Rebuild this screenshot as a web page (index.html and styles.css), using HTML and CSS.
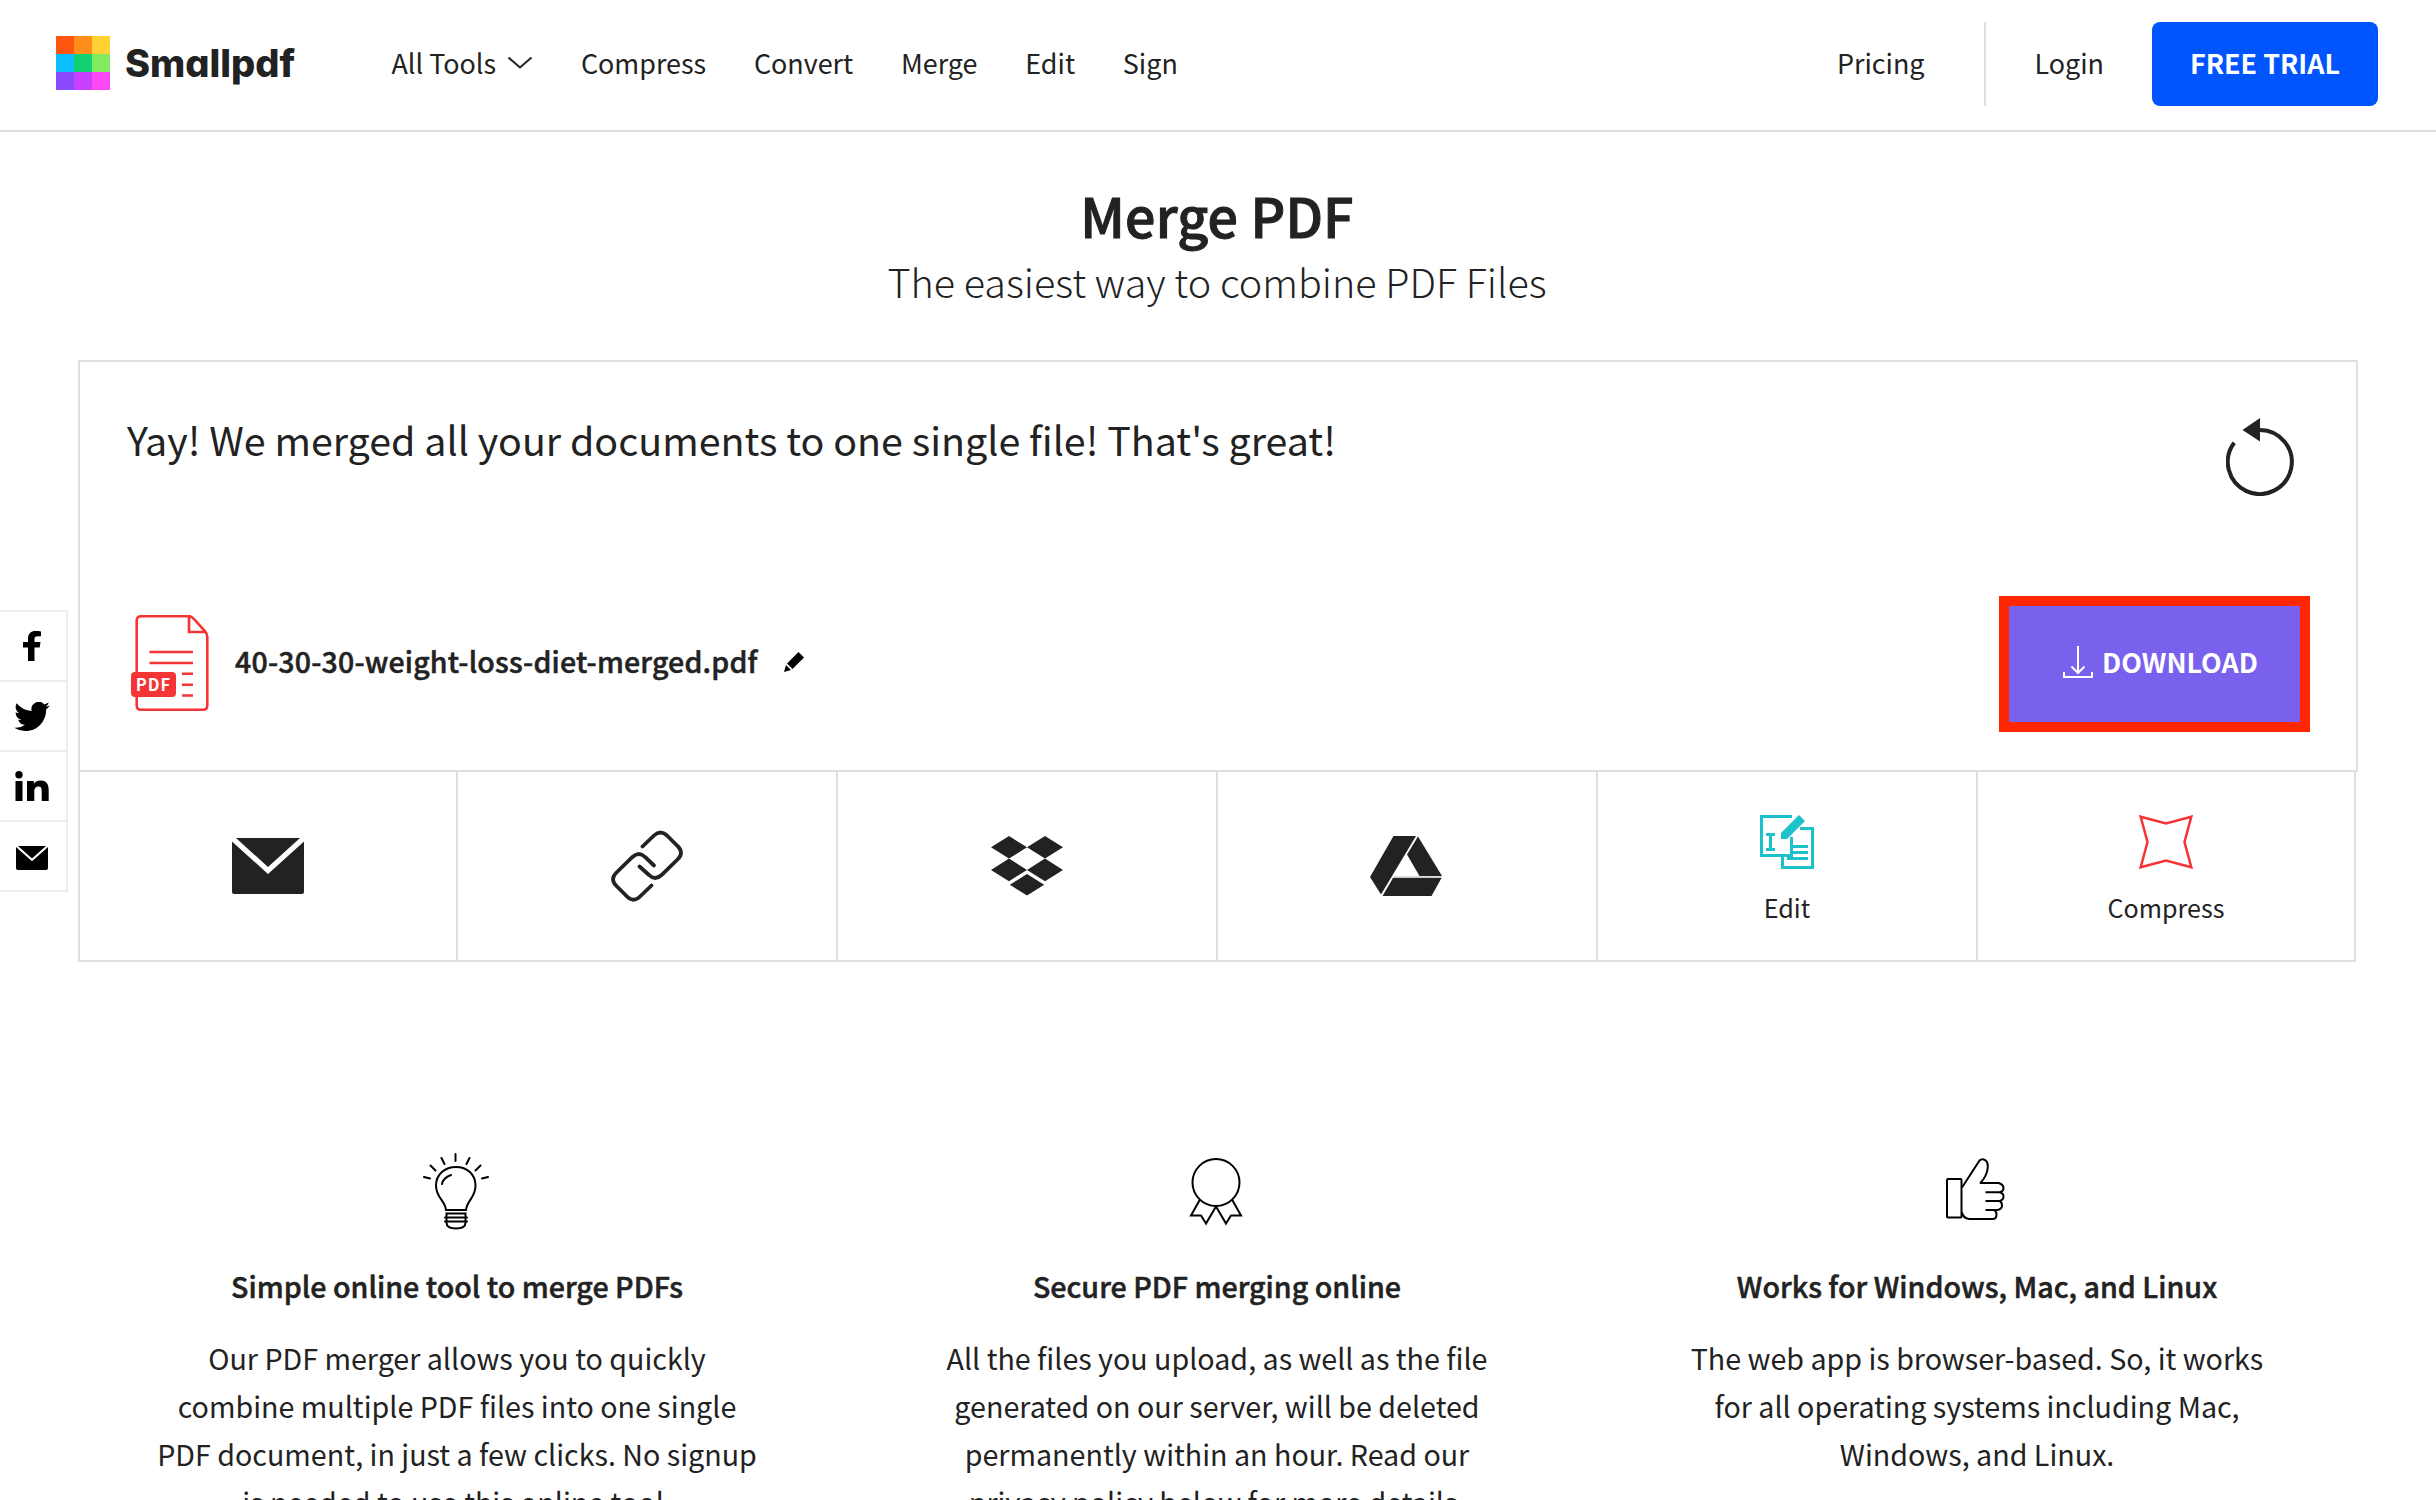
FILE: index.html
```html
<!DOCTYPE html>
<html lang="en">
<head>
    <meta charset="UTF-8">
    <meta name="viewport" content="width=device-width, initial-scale=1.0">
    <title>Merge PDF - Smallpdf</title>
    <link rel="stylesheet" href="styles.css">
</head>
<body>

<!-- Top navigation -->
<header class="header">
    <a class="logo" href="#">
        <svg width="54" height="54" viewBox="0 0 54 54" shape-rendering="crispEdges">
            <rect width="18" height="18" fill="#ff550d"/>
            <rect x="18" width="18" height="18" fill="#ff8e1d"/>
            <rect x="36" width="18" height="18" fill="#ffd132"/>
            <rect y="18" width="18" height="18" fill="#0bbfff"/>
            <rect x="18" y="18" width="18" height="18" fill="#13d171"/>
            <rect x="36" y="18" width="18" height="18" fill="#83e95f"/>
            <rect y="36" width="18" height="18" fill="#8c4aff"/>
            <rect x="18" y="36" width="18" height="18" fill="#c840fb"/>
            <rect x="36" y="36" width="18" height="18" fill="#ff48f6"/>
        </svg>
        <span class="logo-text">Smallpdf</span>
    </a>
    <nav class="nav">
        <a href="#">All Tools
            <svg class="chevron" width="26" height="14" viewBox="0 0 26 14" fill="none" stroke="#222" stroke-width="2">
                <path d="M1.5 1.5 13 11.5 24.5 1.5"/>
            </svg>
        </a>
        <a href="#">Compress</a>
        <a href="#">Convert</a>
        <a href="#">Merge</a>
        <a href="#">Edit</a>
        <a href="#">Sign</a>
    </nav>
    <div class="account">
        <a class="pricing" href="#">Pricing</a>
        <a class="login" href="#">Login</a>
        <a class="trial" href="#">FREE TRIAL</a>
    </div>
</header>

<!-- Share bar on the left edge -->
<div class="share">
    <a href="#">
        <svg width="18" height="30" viewBox="0 0 18 30"><path d="M5 30V16.5H0V11h5V7.5C5 2.5 8 0 12.5 0c2.100 0 4 .2 5.500.4V5.200h-3.200c-2.600 0-3.300 1.200-3.300 3V11h6l-.8 5.500h-5.200V30z"/></svg>
    </a>
    <a href="#">
        <svg width="36" height="29" viewBox="0 0 24 19.5"><path d="M24 2.300a9.800 9.800 0 0 1-2.800.8 4.900 4.900 0 0 0 2.100-2.700 9.800 9.800 0 0 1-3.100 1.200 4.900 4.900 0 0 0-8.400 4.500A14 14 0 0 1 1.700.900a4.900 4.900 0 0 0 1.500 6.600 4.900 4.900 0 0 1-2.200-.6v.1a4.900 4.900 0 0 0 3.900 4.800 4.900 4.900 0 0 1-2.200.1 4.900 4.900 0 0 0 4.600 3.400A9.900 9.900 0 0 1 0 17.300a14 14 0 0 0 7.500 2.200c9.100 0 14-7.500 14-14v-.6A10 10 0 0 0 24 2.300z"/></svg>
    </a>
    <a href="#">
        <svg width="34" height="30" viewBox="0 0 34 30"><circle cx="4" cy="3.7" r="3.7"/><path d="M.5 10h7v20h-7zM12 10h6.800v2.800c1-1.900 3.300-3.300 6.700-3.300 6.800 0 8.200 4.500 8.200 10V30h-7v-9.300c0-2.300 0-5.200-3.200-5.200s-4.200 2.500-4.200 5V30H12z"/></svg>
    </a>
    <a class="share-mail" href="#">
        <svg width="32" height="24" viewBox="0 0 32 24"><path d="M2 0h28l-14 12.500zM0 .9l16 14.300L32 .9V22q0 2-2 2H2q-2 0-2-2z"/></svg>
    </a>
</div>

<main class="main">
    <h1>Merge PDF</h1>
    <h2>The easiest way to combine PDF Files</h2>

    <!-- Result box -->
    <section class="result">
        <div class="result-top">
            <p class="message">Yay! We merged all your documents to one single file! That's great!</p>
            <svg class="restart" width="68" height="78" viewBox="0 0 68 78">
                <path d="M8.2 24.8A32 32 0 1 0 34 12" fill="none" stroke="#222" stroke-width="4"/>
                <path d="M16.5 12 34 0v23.5z" fill="#222"/>
            </svg>
        </div>
        <div class="file">
            <svg class="pdf-icon" width="79" height="96" viewBox="0 0 79 96">
                <g fill="none" stroke="#f53435" stroke-width="2.6">
                    <path d="M60 1.300H10Q5.700 1.300 5.700 5.600V90.400Q5.700 94.700 10 94.700H72Q76.300 94.700 76.300 90.400V21.500Q76 18 73 15L63 4Q61 1.500 58 1.300V17H74"/>
                    <path d="M18.5 37H62M18.5 48H62M51 58.8H62M51 69.7H62M51 80.5H62"/>
                </g>
                <rect y="57" width="45" height="25" rx="4" fill="#f53435"/>
                <text class="pdf-label" x="22.5" y="75.5">PDF</text>
            </svg>
            <span class="file-name">40-30-30-weight-loss-diet-merged.pdf</span>
            <svg class="pencil" width="20" height="20" viewBox="0 0 20 20"><path d="M14.500 0 20 5.500 8.500 17 3 11.500zM2 13l5 5-7 2z"/></svg>
            <button class="download">
                <svg width="30" height="33" viewBox="0 0 30 33" fill="none" stroke="#fff" stroke-width="2">
                    <path d="M15 0V26.500M8.500 20.500 15 27l6.500-6.500M1 26v5h28v-5"/>
                </svg>
                <span>DOWNLOAD</span>
            </button>
        </div>
    </section>

    <!-- Actions -->
    <section class="actions">
        <a href="#">
            <svg width="72" height="56" viewBox="0 0 72 56" fill="#222"><path d="M4 0h64L36 29zM0 3.500 36 36 72 3.500V54q0 2-2 2H2q-2 0-2-2z"/></svg>
        </a>
        <a href="#">
            <svg width="72" height="72" viewBox="0 0 72 72" fill="none" stroke="#222" stroke-width="3.8" stroke-linecap="round">
                <path d="M31.500 16.500 43 5.500Q49.500-.500 56 5.500L66.500 16Q73.500 22.500 66.500 29.500L50.500 45Q44 51 38 45L28.500 36.500"/>
                <path d="M43 35.500 34 27Q28 21 21.500 27L5.500 42.500Q-1.500 49 5.500 56L16 66.500Q22.500 73 29 66.500L40.500 55.500"/>
            </svg>
        </a>
        <a href="#">
            <svg width="72" height="60" viewBox="0 0 72 60" fill="#222"><path d="M18 0 36 11.300 18 22.600 0 11.300zM54 0 72 11.300 54 22.600 36 11.300zM18 22.600 36 33.900 18 45.200 0 33.900zM54 22.600 72 33.900 54 45.200 36 33.900z"/><path d="M36 37.500 54 48.800 36 60 18 48.800z" stroke="#fff"/></svg>
        </a>
        <a class="drive" href="#">
            <svg width="72" height="60" viewBox="0 0 72 60" fill="#222"><path d="M23.500 0H46L11 58.500 0 41zM48 .5 72 40H49.500L37 18.500zM23 42H71.500L61.500 60H12.500z"/><path d="M24 40.300H72L71.500 42H23z" fill="#ccc"/></svg>
        </a>
        <a class="tool" href="#">
            <svg width="54" height="54" viewBox="0 0 54 54" fill="none" stroke="#1bc2c9" stroke-width="3">
                <path d="M32 1.500H1.500V40.500H31.500V22M40 13.500H52.500V52.500H22.500V42M6 19.500h9M10.500 19.500v15M6 34.500h9M33 31.500h15M33 37.500h15M27 43.500h21"/>
                <path d="M39 0 45 6 27 24h-6v-6z" fill="#1bc2c9" stroke="none"/>
            </svg>
            <span>Edit</span>
        </a>
        <a class="tool" href="#">
            <svg width="54" height="54" viewBox="0 0 54 54" fill="none" stroke="#f53435" stroke-width="2.5"><path d="M1.700 1.700 27 8.500 52.300 1.700 45.500 27 52.300 52.300 27 45.500 1.700 52.300 8.500 27z"/></svg>
            <span>Compress</span>
        </a>
    </section>

    <!-- Features -->
    <section class="features">
        <div class="feature">
            <svg width="66" height="78" viewBox="0 0 66 78" fill="none" stroke="#000" stroke-width="2" stroke-linecap="round">
                <path d="M23 57C22 47 13 45 13 32.500 13 21 22 14 33 14s19.500 7 19.500 18.500C52.500 45 44 47 43 57zM23.500 60.500h19v9q0 6-9.500 6t-9.500-6zM22 64.500h22M22 68.500h22M19 31q1-6 9-9"/>
                <path d="M32.500 1v7M18.500 5l3 6M46.500 5l-3 6M7.500 12.500l5 5M57.500 12.500l-5 5M1 24l6 1.500M65 24l-6 1.500"/>
            </svg>
            <h3>Simple online tool to merge PDFs</h3>
            <p>Our PDF merger allows you to quickly combine multiple PDF files into one single PDF document, in just a few clicks. No signup is needed to use this online tool.</p>
        </div>
        <div class="feature">
            <svg width="66" height="78" viewBox="0 0 66 78" fill="none" stroke="#000" stroke-width="2">
                <circle cx="33" cy="29.5" r="23.5"/>
                <path d="M17 46.500 8 62.500h10l5 8L33 53.500 43 70.500l5-8h10L49 46.500"/>
            </svg>
            <h3>Secure PDF merging online</h3>
            <p>All the files you upload, as well as the file generated on our server, will be deleted permanently within an hour. Read our privacy policy below for more details.</p>
        </div>
        <div class="feature">
            <svg width="66" height="78" viewBox="0 0 66 78" fill="none" stroke="#000" stroke-width="2" stroke-linejoin="round">
                <rect x="4" y="26" width="14.5" height="38.5" rx="1"/>
                <path d="M19 34.500 36.500 7.500Q38 6 40 6.200 45 7 44.800 14 44.500 22 37.500 30H55.500Q60.500 31.500 60.500 35 60.500 38.500 56.500 39.200H42.500M56.500 39.200Q60.500 40 60.500 43.500T56.500 48H42.500M56.500 48Q59 49 59 52.500T54.500 57H42.500M51.500 57Q53.500 59 53.500 61.500 53.500 66 49.500 66H26Q20 65 19 59.500"/>
            </svg>
            <h3>Works for Windows, Mac, and Linux</h3>
            <p>The web app is browser-based. So, it works for all operating systems including Mac, Windows, and Linux.</p>
        </div>
    </section>
</main>

</body>
</html>
```
FILE: styles.css
```css
* {
    box-sizing: border-box;
}
body {
    font-family: "Noto Sans CJK SC", "Noto Sans", sans-serif;
    margin: 0;
    height: 1500px;
    overflow: hidden;
    background-color: #fff;
    color: #222;
}
a {
    color: #222;
    text-decoration: none;
}
svg {
    display: block;
    flex: none;
}

/* Header */
.header {
    display: flex;
    align-items: center;
    height: 132px;
    padding: 0 58px 2px 56px;
    border-bottom: 2px solid #dfdfdf;
    font-size: 26.9px;
    line-height: 40px;
}
.logo {
    display: flex;
    align-items: center;
    width: 335.5px;
    padding-bottom: 2px;
}
.logo-text {
    margin-left: 15px;
    font-family: Inter, sans-serif;
    font-feature-settings: "cv11";
    font-size: 38px;
    font-weight: 800;
}
.nav {
    display: flex;
    gap: 47.8px;
    padding-bottom: 3px;
}
.nav a {
    display: flex;
    align-items: center;
}
.chevron {
    margin-left: 11px;
}
.account {
    display: flex;
    align-items: center;
    margin-left: auto;
}
.pricing {
    padding: 0 60px 3px 0;
}
.login {
    height: 84px;
    padding: 21px 48px 0 48px;
    border-left: 2px solid #dfdfdf;
}
.trial {
    display: flex;
    align-items: center;
    justify-content: center;
    width: 226px;
    height: 84px;
    padding-bottom: 3px;
    border-radius: 8px;
    background-color: #05f;
    color: #fff;
    font-weight: bold;
}

/* Share bar */
.share {
    position: absolute;
    left: 0;
    top: 610px;
    width: 68px;
    border: 2px solid #ededed;
    border-left: 0;
    border-bottom: 0;
}
.share a {
    display: flex;
    align-items: center;
    justify-content: center;
    height: 70px;
    padding-right: 3px;
    border-bottom: 2px solid #ededed;
}
.share .share-mail {
    padding-top: 4px;
}

/* Titles */
.main {
    width: 2280px;
    margin: 0 78px;
}
/* No semibold in this family, so thicken the medium weight a little */
h1, h3, .file-name {
    font-weight: 500;
    -webkit-text-stroke: 0.5px #222;
}
h1 {
    margin: 0;
    padding: 45px 2px 0 0;
    font-size: 53.7px;
    line-height: 76px;
    text-align: center;
    letter-spacing: 0.2px;
    -webkit-text-stroke-width: 1px;
}
h2 {
    margin: 0;
    padding-right: 2px;
    font-size: 39.5px;
    font-weight: 300;
    line-height: 56px;
    text-align: center;
}

/* Result box */
.result {
    height: 412px;
    margin-top: 51px;
    padding: 48px 46px 0 46px;
    border: 2px solid #dfdfdf;
}
.result-top {
    display: flex;
    justify-content: space-between;
    height: 186px;
}
.message {
    margin: 0 0 0 1px;
    font-size: 39.4px;
    line-height: 58px;
}
.restart {
    margin: 8px 16px 0 0;
}
.file {
    display: flex;
    align-items: center;
    height: 136px;
}
.pdf-icon {
    margin: 0 25px 3px 5px;
}
.pdf-label {
    fill: #fff;
    font-size: 16.5px;
    font-weight: bold;
    letter-spacing: 1px;
    text-anchor: middle;
}
.file-name {
    padding-bottom: 7px;
    font-size: 28.5px;
    letter-spacing: 0.2px;
}
.pencil {
    margin: 0 0 4px 26px;
}
.download {
    display: flex;
    align-items: center;
    width: 311px;
    height: 136px;
    margin-left: auto;
    padding: 0 0 0 54px;
    border: 10px solid #ff2600;
    background-color: #7961ee;
    color: #fff;
    font-family: inherit;
    font-size: 26.9px;
    font-weight: bold;
    line-height: 40px;
}
.download svg {
    margin-bottom: 3px;
}
.download span {
    margin-left: 9px;
    padding-bottom: 4px;
}

/* Actions */
.actions {
    display: flex;
    width: 2278px;
    height: 190px;
    border: solid #dfdfdf;
    border-width: 0 2px 2px 2px;
}
.actions a {
    display: flex;
    flex-direction: column;
    align-items: center;
    justify-content: center;
    width: 380px;
    border-right: 2px solid #dfdfdf;
}
.actions a:first-child {
    width: 378px;
}
.actions a:last-child {
    width: 376px;
    border-right: 0;
}
.actions .drive {
    padding-right: 2px;
}
.actions .tool {
    padding-top: 10px;
}
.actions span {
    margin-top: 18px;
    font-size: 25.1px;
    line-height: 40px;
}

/* Features */
.features {
    display: flex;
    margin-left: -1px;
    padding-top: 191px;
}
.feature {
    display: flex;
    flex-direction: column;
    align-items: center;
    width: 760px;
    padding: 0 78px;
    font-size: 28.65px;
    line-height: 48px;
    text-align: center;
}
.feature svg {
    margin-right: 3px;
}
h3 {
    margin: 31px 0 24px;
    font-size: 28.65px;
}
.feature p {
    margin: 0;
}
```
